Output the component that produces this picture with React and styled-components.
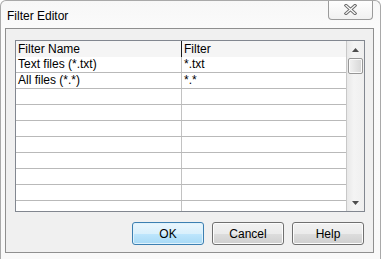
import React from 'react';
import styled, { createGlobalStyle } from 'styled-components';

const GlobalStyle = createGlobalStyle`
  html, body {
    margin: 0;
    padding: 0;
    background: #ffffff;
  }
  body {
    font-family: "Liberation Sans", Arial, sans-serif;
    font-size: 12px;
    color: #000;
  }
`;

const Window = styled.div`
  box-sizing: border-box;
  width: 381px;
  height: 259px;
  display: flex;
  flex-direction: column;
  border: 1px solid #a9a9a9;
  border-bottom: none;
  border-radius: 6px 6px 0 0;
  background: linear-gradient(#f7f7f7, #fbfbfb 30px, #f9f9f9);
  overflow: hidden;
`;

const TitleBar = styled.div`
  height: 27px;
  display: flex;
  align-items: flex-start;
  justify-content: space-between;
`;

const Title = styled.div`
  padding: 8px 0 0 6px;
  font-size: 12px;
  line-height: 15px;
  color: #000;
`;

const CloseButton = styled.div`
  box-sizing: border-box;
  width: 45px;
  height: 20px;
  margin: -1px 7px 0 0;
  display: flex;
  align-items: center;
  justify-content: center;
  border: 1px solid #9b9b9b;
  border-top: none;
  border-radius: 0 0 4px 4px;
  background: linear-gradient(#ffffff, #f1f1f1);
`;

const Client = styled.div`
  box-sizing: border-box;
  margin: 0 6px 0 4px;
  flex: 1;
  display: flex;
  flex-direction: column;
  border: 1px solid #8f8f8f;
  border-bottom: none;
  background: #f0f0f0;
  padding: 11px 8px 0 9px;
`;

const ClientBottom = styled.div`
  height: 6px;
  border-top: 1px solid #8f8f8f;
  margin: 0 6px 0 4px;
`;

const Grid = styled.div`
  box-sizing: border-box;
  width: 350px;
  height: 172px;
  display: flex;
  border: 1px solid #828790;
  background: #ffffff;
  overflow: hidden;
`;

const Table = styled.div`
  flex: 1;
  display: flex;
  flex-direction: column;
  border-right: 1px solid #c8c8c8;
`;

const Row = styled.div`
  display: grid;
  grid-template-columns: 166px 1fr;
  height: ${({ header }) => (header ? '16px' : '15px')};
  flex-shrink: 0;
  background: ${({ header }) => (header ? '#f5f5f5' : '#ffffff')};
  border-bottom: ${({ header }) => (header ? 'none' : '1px solid #b9b9b9')};
`;

const Cell = styled.div`
  box-sizing: border-box;
  padding: 0 0 0 2px;
  line-height: ${({ header }) => (header ? '17px' : '15px')};
  white-space: nowrap;
  overflow: hidden;
  border-right: ${({ last, header }) =>
    last ? 'none' : header ? '1px solid #1c1c1c' : '1px solid #c2c2c2'};
`;

const ScrollBar = styled.div`
  width: 17px;
  display: flex;
  flex-direction: column;
  align-items: center;
  background: linear-gradient(90deg, #e8e8e8, #f4f4f4 40%, #efefef);
`;

const Arrow = styled.div`
  height: 17px;
  width: 17px;
  display: flex;
  align-items: center;
  justify-content: center;
`;

const Thumb = styled.div`
  box-sizing: border-box;
  width: 15px;
  height: 16px;
  border: 1px solid #979797;
  border-radius: 2px;
  background: linear-gradient(90deg, #f2f2f2, #e4e4e4 50%, #d6d6d6);
  box-shadow: inset 0 0 0 1px #fbfbfb;
`;

const Spacer = styled.div`
  flex: 1;
`;

const ButtonRow = styled.div`
  display: flex;
  justify-content: flex-end;
  gap: 8px;
  margin-top: 10px;
  width: 349px;
`;

const Button = styled.div`
  box-sizing: border-box;
  width: 72px;
  height: 23px;
  display: flex;
  align-items: center;
  justify-content: center;
  border: 1px solid ${({ primary }) => (primary ? '#3c7fb1' : '#707070')};
  border-radius: 3px;
  font-size: 12px;
  color: #000;
  background: ${({ primary }) =>
    primary
      ? 'linear-gradient(#eaf6fd, #d9f0fc 50%, #bee6fd 51%, #a7d9f5)'
      : 'linear-gradient(#f2f2f2, #ebebeb 50%, #dddddd 51%, #cfcfcf)'};
  box-shadow: inset 0 0 0 1px ${({ primary }) => (primary ? '#dff2fc' : '#fcfcfc')};
`;

const rows = [
  { name: 'Text files (*.txt)', filter: '*.txt' },
  { name: 'All files (*.*)', filter: '*.*' },
  ...Array.from({ length: 8 }, () => ({ name: '', filter: '' })),
];

const CloseIcon = () => (
  <svg width="13" height="11" viewBox="0 0 13 11">
    <path d="M2 1.5 L11 9.5 M11 1.5 L2 9.5" stroke="#6f6f6f" strokeWidth="3.2" strokeLinecap="square" />
    <path d="M2 1.5 L11 9.5 M11 1.5 L2 9.5" stroke="#ffffff" strokeWidth="1.2" strokeLinecap="square" />
  </svg>
);

const Triangle = ({ down }) => (
  <svg width="7" height="4" viewBox="0 0 7 4">
    <path d={down ? 'M0 0 L7 0 L3.5 4 Z' : 'M3.5 0 L7 4 L0 4 Z'} fill="#4d4d4d" />
  </svg>
);

const App = () => (
  <>
    <GlobalStyle />
    <Window>
      <TitleBar>
        <Title>Filter Editor</Title>
        <CloseButton>
          <CloseIcon />
        </CloseButton>
      </TitleBar>
      <Client>
        <Grid>
          <Table>
            <Row header>
              <Cell header>Filter Name</Cell>
              <Cell header last>
                Filter
              </Cell>
            </Row>
            {rows.map((r, i) => (
              <Row key={i}>
                <Cell>{r.name}</Cell>
                <Cell last>{r.filter}</Cell>
              </Row>
            ))}
          </Table>
          <ScrollBar>
            <Arrow>
              <Triangle />
            </Arrow>
            <Thumb />
            <Spacer />
            <Arrow>
              <Triangle down />
            </Arrow>
          </ScrollBar>
        </Grid>
        <ButtonRow>
          <Button primary>OK</Button>
          <Button>Cancel</Button>
          <Button>Help</Button>
        </ButtonRow>
      </Client>
      <ClientBottom />
    </Window>
  </>
);

export default App;
